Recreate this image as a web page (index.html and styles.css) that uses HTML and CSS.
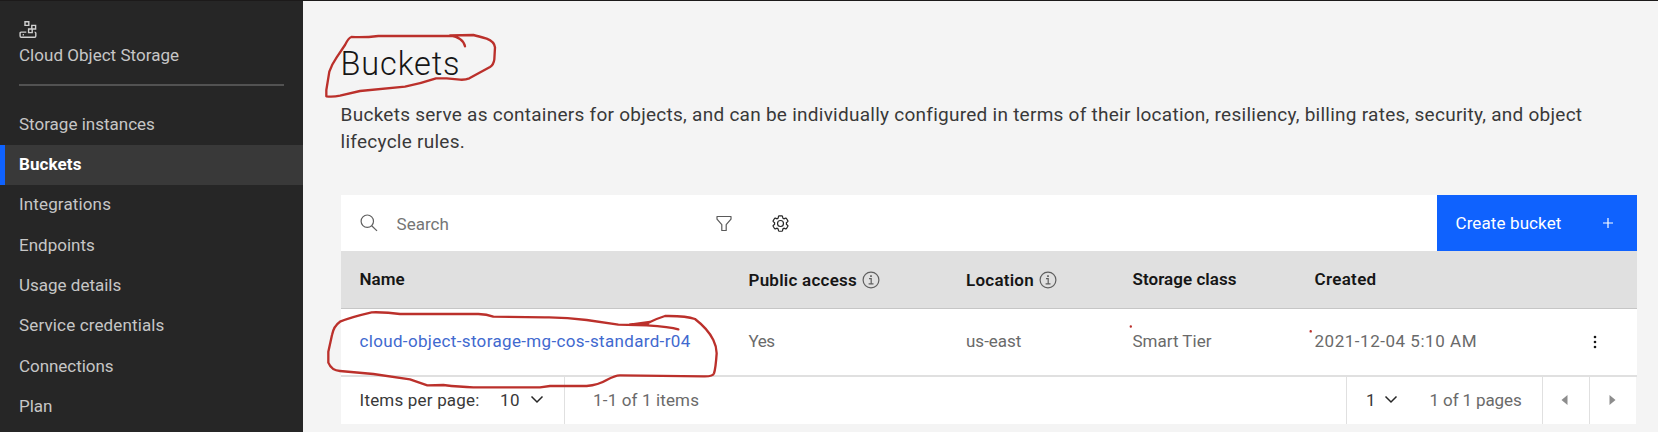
FILE: index.html
```html
<!DOCTYPE html>
<html lang="en">
<head>
<meta charset="utf-8">
<title>Buckets</title>
<link rel="stylesheet" href="styles.css">
</head>
<body>
<div class="app">
  <aside class="sidebar">
    <header class="product">
      <svg class="product-icon" width="19" height="19" viewBox="0 0 19 19" fill="none" stroke="#d0d0d0" stroke-width="1.4">
        <path d="M6 1.8h3.8v3.6H6zM12.8 5.4h3.8V9h-3.8zM9.600 9h3.600v3.600H9.600zM7.300 12.100H2.100c-.8 0-1 .4-1 1v3c0 .8.4 1.200 1.200 1.200h13.300c.8 0 1.200-.4 1.200-1.200v-3c0-.7-.4-1-1.200-1M3.700 14.800h1.200"/>
      </svg>
      <div class="product-name">Cloud Object Storage</div>
    </header>
    <nav class="nav">
      <a class="nav-item">Storage instances</a>
      <a class="nav-item active">Buckets</a>
      <a class="nav-item wide">Integrations</a>
      <a class="nav-item">Endpoints</a>
      <a class="nav-item">Usage details</a>
      <a class="nav-item wide">Service credentials</a>
      <a class="nav-item tight">Connections</a>
      <a class="nav-item tight">Plan</a>
    </nav>
  </aside>
  <main class="main">
    <h1 class="title">Buckets</h1>
    <p class="lead">Buckets serve as containers for objects, and can be individually configured in terms of their location, resiliency, billing rates, security, and object<br>lifecycle rules.</p>
    <section class="card">
      <div class="toolbar">
        <svg class="search-icon" width="18" height="18" viewBox="0 0 18 18" fill="none" stroke="#606060" stroke-width="1.2"><circle cx="7.300" cy="7.200" r="6.200"/><path d="M11.700 11.700l5.300 5.200"/></svg>
        <span class="search">Search</span>
        <svg class="filter-icon" width="16" height="17" viewBox="0 0 16 17" fill="none" stroke="#5a5a5a" stroke-width="1.200" stroke-linejoin="round"><path d="M1 1.500h14v2.700L10.200 9.600v5.900H5.800V9.600L1 4.200z"/></svg>
        <svg class="gear-icon" width="19" height="19" viewBox="0 0 32 32" fill="#262626"><path d="M27 16.760V15.240l1.920-1.680A2 2 0 0 0 29.300 11l-2.360-4a2 2 0 0 0-1.730-1 2 2 0 0 0-.64.100l-2.430.820a11.350 11.350 0 0 0-1.310-.750l-.510-2.520a2 2 0 0 0-2-1.610H13.640a2 2 0 0 0-2 1.610l-.510 2.520a11.480 11.480 0 0 0-1.320.750L7.430 6.060A2 2 0 0 0 6.790 6a2 2 0 0 0-1.730 1L2.700 11a2 2 0 0 0 .410 2.510L5 15.240v1.520l-1.890 1.680A2 2 0 0 0 2.700 21l2.360 4a2 2 0 0 0 1.730 1 2 2 0 0 0 .640-.100l2.430-.820a11.350 11.350 0 0 0 1.310.750l.510 2.520a2 2 0 0 0 2 1.610h4.720a2 2 0 0 0 2-1.610l.510-2.520a11.480 11.480 0 0 0 1.320-.750l2.420.820a2 2 0 0 0 .640.100 2 2 0 0 0 1.730-1l2.280-4a2 2 0 0 0-.410-2.510zM25.210 24l-3.430-1.160a8.860 8.860 0 0 1-2.710 1.570L18.360 28H13.640l-.710-3.550a9.360 9.360 0 0 1-2.700-1.570L6.790 24 4.430 20l2.720-2.400a8.900 8.900 0 0 1 0-3.130L4.430 12 6.790 8l3.430 1.160a8.860 8.860 0 0 1 2.710-1.570L13.640 4h4.720l.710 3.550a9.360 9.360 0 0 1 2.700 1.570L25.210 8l2.360 4-2.720 2.400a8.900 8.900 0 0 1 0 3.130L27.570 20z"/><path d="M16 22a6 6 0 1 1 6-6 5.940 5.940 0 0 1-6 6zm0-10a3.910 3.910 0 0 0-4 4 3.910 3.910 0 0 0 4 4 3.910 3.910 0 0 0 4-4 3.910 3.910 0 0 0-4-4z"/></svg>
        <button class="create"><span>Create bucket</span>
          <svg width="12" height="12" viewBox="0 0 12 12" stroke="#fff" stroke-width="1.200"><path d="M6 1v10M1 6h10"/></svg>
        </button>
      </div>
      <div class="row head">
        <div>Name</div>
        <div class="with-info public"><span>Public access</span>
          <svg width="18" height="18" viewBox="0 0 18 18" fill="none" stroke="#5f5f5f" stroke-width="1.200"><circle cx="9" cy="9" r="7.900"/><path d="M7 7.600h2.200v5M6.600 12.800h4.900"/><path d="M9 4.200v1.800" stroke-width="1.700"/></svg>
        </div>
        <div class="with-info"><span>Location</span>
          <svg width="18" height="18" viewBox="0 0 18 18" fill="none" stroke="#5f5f5f" stroke-width="1.200"><circle cx="9" cy="9" r="7.900"/><path d="M7 7.600h2.200v5M6.600 12.800h4.900"/><path d="M9 4.200v1.800" stroke-width="1.700"/></svg>
        </div>
        <div>Storage class</div>
        <div class="created">Created</div>
        <div></div>
      </div>
      <div class="row body">
        <div><a class="bucket">cloud-object-storage-mg-cos-standard-r04</a></div>
        <div class="yes">Yes</div>
        <div>us-east</div>
        <div>Smart Tier</div>
        <div class="date">2021-12-04 5:10 AM</div>
        <div class="menu"><svg width="4" height="14" viewBox="0 0 4 14" fill="#161616"><circle cx="2" cy="2" r="1.300"/><circle cx="2" cy="7" r="1.300"/><circle cx="2" cy="12" r="1.300"/></svg></div>
      </div>
      <footer class="pagination">
        <div class="per-page"><span class="per-label">Items per page:</span><span class="per-value">10</span>
          <svg width="14" height="9" viewBox="0 0 14 9" fill="none" stroke="#262626" stroke-width="1.500"><path d="M1.500 1.500L7 7l5.500-5.500"/></svg></div>
        <div class="range">1-1 of 1 items</div>
        <div class="page"><span>1</span>
          <svg width="14" height="9" viewBox="0 0 14 9" fill="none" stroke="#262626" stroke-width="1.500"><path d="M1.500 1.500L7 7l5.500-5.500"/></svg>
          <span class="pages">1 of 1 pages</span></div>
        <div class="arrow prev"><svg width="7" height="10" viewBox="0 0 7 10" fill="#8d8d8d"><path d="M6.500 0v10L.5 5z"/></svg></div>
        <div class="arrow"><svg width="7" height="10" viewBox="0 0 7 10" fill="#8d8d8d"><path d="M.5 0v10l6-5z"/></svg></div>
      </footer>
    </section>
  </main>
  <svg class="marks" width="1658" height="432" viewBox="0 0 1658 432" fill="none" stroke="#bb302b" stroke-linecap="round" stroke-linejoin="round">
    <g transform="translate(310 20) scale(.33333)" stroke-width="7">
      <path d="M465 79Q460 53 420 46L490 45Q505 49 530 56Q553 65 555 82L553 118Q551 134 540 141L478 175Q466 180 450 179L410 175L378 175Q330 191 285 200L150 213L90 227Q70 231 49 229L49 210L58 155Q66 132 80 112L105 75Q115 54 124 51Q165 53 205 48H430"/>
    </g>
    <g transform="translate(320 300) scale(.33333)" stroke-width="7">
      <path d="M1075 88Q1050 80 980 76L895 74L800 60Q735 51 675 52L520 50Q500 43 475 42H240Q200 36 155 37Q90 52 60 65Q41 78 36 105L25 155V188Q35 212 60 213L160 222L270 238L322 256L370 255Q420 261 460 262H660L690 258H800Q835 255 860 240Q885 226 900 226L1150 229Q1178 230 1182 220Q1187 205 1190 160Q1190 140 1180 120Q1164 87 1125 57Q1098 47 1035 48Q1010 56 990 66L930 74Q955 74 985 70"/>
    </g>
    <path d="M1130.800 326.500v.1M1310.700 331.300v.1" stroke-width="2.400"/>
  </svg>
</div>
</body>
</html>
```
FILE: styles.css
```css
* { box-sizing: border-box; }
body { margin: 0; background: #f4f4f4; font: 17px/24px Roboto, "Noto Sans", sans-serif; color: #6a6a6a; }
.app { position: relative; display: flex; width: 1658px; height: 432px; overflow: hidden; border-top: 1px solid #1c1a1a; }
svg { display: block; flex: none; }

.sidebar { width: 302.5px; flex: none; background: #262626; color: #c6c6c6; }
.product { height: 84.500px; margin: 0 18.500px 0 19px; padding-top: 18.500px; border-bottom: 2px solid #525252; }
.product-name { margin-top: 4px; letter-spacing: .03px; }
.nav { padding-top: 19px; }
.nav-item { display: flex; align-items: center; height: 40.350px; padding: 0 0 2px 19px; }
.nav-item.active { background: #393939; color: #fff; font-weight: 700; letter-spacing: .1px; border-left: 5px solid #0f62fe; padding-left: 14px; }
.nav-item.wide { letter-spacing: .14px; }
.nav-item.tight { letter-spacing: -.05px; }

.main { width: 1296.400px; margin-left: 38.100px; flex: none; }
.title { margin: 43px 0 0; font-size: 32.500px; line-height: 40px; font-weight: 300; letter-spacing: .84px; color: #161616; }
.lead { margin: 16.500px 0 0; font-size: 19px; line-height: 27.500px; letter-spacing: .26px; color: #393939; white-space: nowrap; }
.card { margin-top: 39.500px; }

.toolbar { display: flex; align-items: center; height: 56px; padding-left: 19px; background: #fff; color: #757575; }
.search { margin: 2px 0 0 19px; width: 319px; }
.filter-icon { margin-right: 39px; }
.create { display: flex; justify-content: space-between; align-items: center; width: 200px; height: 56px; margin-left: auto; padding: 0 23px 0 18.500px; border: 0; background: #0f62fe; color: #fff; font: inherit; letter-spacing: .11px; }

.row { display: grid; grid-template-columns: 389px 217.500px 166.500px 182px 278.500px auto; align-items: center; padding-left: 18.900px; }
.head { height: 58px; padding-bottom: 1px; background: #e0e0e0; border-bottom: 1.500px solid #c6c6c6; color: #161616; font-weight: 600; letter-spacing: .05px; }
.with-info { display: flex; align-items: center; gap: 5px; padding-top: 1px; letter-spacing: .24px; }
.created { letter-spacing: .32px; }
.body { height: 68px; padding-bottom: 2px; background: #fff; border-bottom: 2px solid #e0e0e0; }
.bucket { color: #4169cf; letter-spacing: .34px; }
.yes { letter-spacing: -.4px; }
.date { letter-spacing: .53px; }
.menu { padding-top: 2px; }

.pagination { display: flex; align-items: center; height: 47px; margin-right: 1px; background: #fff; }
.pagination > div { display: flex; align-items: center; height: 100%; padding-bottom: 2px; }
.per-page { width: 224px; padding-left: 19px; border-right: 1px solid #e0e0e0; color: #393939; letter-spacing: .19px; }
.per-value { margin: 0 10px 0 20.500px; letter-spacing: .45px; }
.range { padding-left: 28.500px; letter-spacing: .14px; }
.page { width: 196px; margin-left: auto; padding-left: 19px; border-left: 1px solid #e0e0e0; color: #393939; }
.page > svg { margin-left: 8.500px; }
.pages { margin-left: 31.500px; color: #6a6a6a; letter-spacing: -.12px; }
.arrow { width: 47px; justify-content: center; border-left: 1px solid #e0e0e0; }
.arrow.prev { padding-right: 2px; }

.marks { position: absolute; left: 0; top: -1px; }
```
